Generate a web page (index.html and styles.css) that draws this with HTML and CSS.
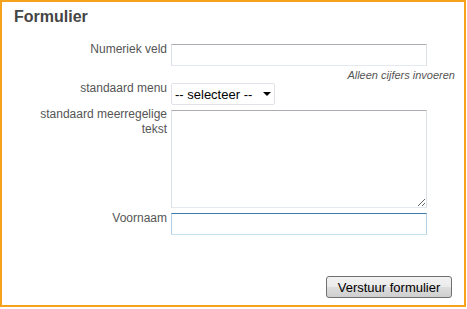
FILE: index.html
```html
<!DOCTYPE html>
<html lang="nl">
<head>
    <meta charset="UTF-8">
    <title>Formulier</title>
    <link rel="stylesheet" href="styles.css">
</head>
<body>

<div class="frame">
    <h2 class="title">Formulier</h2>

    <form class="form" onsubmit="return false;">
        <div class="row row-num">
            <label class="lbl" for="num">Numeriek veld</label>
            <input class="field" id="num" type="text">
        </div>
        <div class="hint">Alleen cijfers invoeren</div>

        <div class="row row-menu">
            <label class="lbl" for="menu">standaard menu</label>
            <div class="select-wrap">
                <select class="select" id="menu">
                    <option>-- selecteer --</option>
                </select>
                <span class="arrow"></span>
            </div>
        </div>

        <div class="row row-text">
            <label class="lbl" for="txt">standaard meerregelige tekst</label>
            <textarea class="area" id="txt"></textarea>
        </div>

        <div class="row row-name">
            <label class="lbl" for="naam">Voornaam</label>
            <input class="field focus" id="naam" type="text">
        </div>

        <div class="actions">
            <button class="submit" type="submit">Verstuur formulier</button>
        </div>
    </form>
</div>

</body>
</html>
```

FILE: styles.css
```css
body {
    margin: 0;
    font-family: "Liberation Sans", Arial, sans-serif;
    background-color: white;
}
.frame {
    box-sizing: border-box;
    width: 466px;
    height: 307px;
    border: 2px solid #f7a21b;
    padding: 6px 0 0 0;
}
.title {
    margin: 0 0 0 12px;
    font-size: 16px;
    line-height: 18px;
    font-weight: bold;
    color: #454545;
}
.form {
    margin-top: 16px;
}
.row {
    display: flex;
    align-items: flex-start;
}
.lbl {
    width: 151px;
    margin: 0 4px 0 14px;
    text-align: right;
    font-size: 12px;
    line-height: 15px;
    color: #555;
}
.field {
    box-sizing: border-box;
    width: 256px;
    height: 22px;
    margin: 2px 0 0 0;
    padding: 2px 3px;
    border: 1px solid #dbdfe6;
    border-top-color: #abadb3;
    border-bottom-color: #e3e9ef;
    font-family: inherit;
    font-size: 13px;
    outline: none;
}
.field.focus {
    border-color: #b5cfe7;
    border-top-color: #3d7bad;
    border-bottom-color: #c7e2f1;
}
.hint {
    margin: 3px 9px 0 0;
    text-align: right;
    font-size: 11px;
    line-height: 13px;
    font-style: italic;
    color: #555;
}
.row-menu {
    margin-top: -1px;
}
.select-wrap {
    position: relative;
    margin-top: 2px;
}
.select {
    box-sizing: border-box;
    width: 104px;
    height: 22px;
    padding: 0 0 0 3px;
    border: 1px solid #e2e3ea;
    border-radius: 2px;
    background: white;
    appearance: none;
    -webkit-appearance: none;
    font-family: inherit;
    font-size: 13px;
    color: black;
    outline: none;
}
.arrow {
    position: absolute;
    right: 4px;
    top: 9px;
    width: 0;
    height: 0;
    border-left: 4px solid transparent;
    border-right: 4px solid transparent;
    border-top: 4px solid black;
    pointer-events: none;
}
.row-text {
    margin-top: 2px;
}
.area {
    box-sizing: border-box;
    width: 256px;
    height: 98px;
    margin: 3px 0 0 0;
    border: 1px solid #dbdfe6;
    border-top-color: #abadb3;
    border-bottom-color: #e3e9ef;
    font-family: inherit;
    font-size: 13px;
    outline: none;
}
.row-name {
    margin-top: 3px;
}
.actions {
    display: flex;
    justify-content: flex-end;
    margin: 41px 12px 0 0;
}
.submit {
    box-sizing: border-box;
    width: 126px;
    height: 22px;
    padding: 0;
    border: 1px solid #707070;
    border-radius: 3px;
    background: linear-gradient(#f2f2f2 0%, #ebebeb 50%, #dddddd 51%, #cfcfcf 100%);
    font-family: inherit;
    font-size: 13px;
    color: black;
    cursor: pointer;
}
```
